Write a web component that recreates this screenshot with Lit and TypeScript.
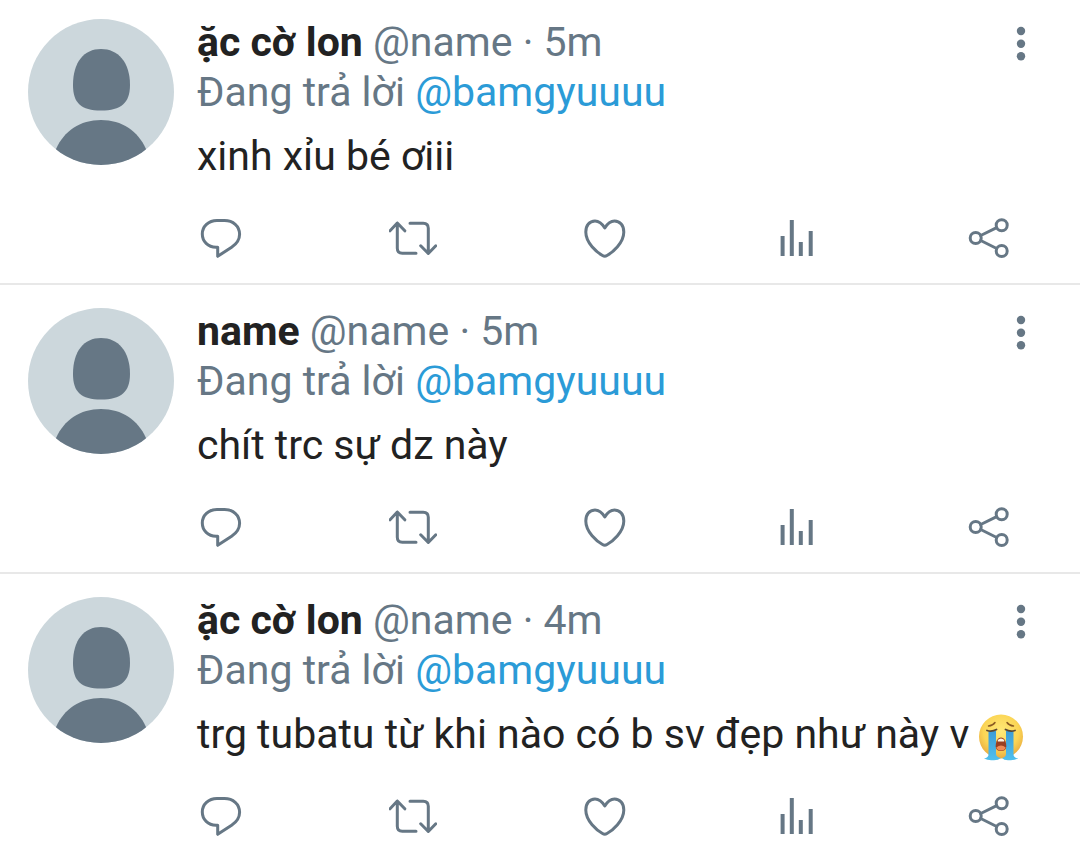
import { LitElement, html, css, svg, nothing } from "lit";
import { customElement, property } from "lit/decorators.js";

interface Tweet {
  name: string;
  handle: string;
  time: string;
  replyTo: string;
  text: string;
  crying?: boolean;
}

const tweets: Tweet[] = [
  { name: "ặc cờ lon", handle: "@name", time: "5m", replyTo: "@bamgyuuuu", text: "xinh xỉu bé ơiii" },
  { name: "name", handle: "@name", time: "5m", replyTo: "@bamgyuuuu", text: "chít trc sự dz này" },
  {
    name: "ặc cờ lon",
    handle: "@name",
    time: "4m",
    replyTo: "@bamgyuuuu",
    text: "trg tubatu từ khi nào có b sv đẹp như này v",
    crying: true,
  },
];

const actions = [
  {
    label: "Reply",
    icon: svg`<path d="M20 6.5h7.5C36 6.5 42.6 12 42.6 20.3c0 5.700-3 9.700-8 13L20.700 42.300V33.200H19C11 33 5.300 27.500 5.300 20S11.500 6.500 20 6.500z"/>`,
  },
  {
    label: "Retweet",
    icon: svg`<path d="M1 16.800 8.300 9l7.500 7.800M8.300 9v25.300q0 5 5 5H27M21 9.300h13.300q5 0 5 5V39M31.700 31.800 39.300 39.500l7.500-7.700"/>`,
  },
  {
    label: "Like",
    icon: svg`<path d="M23.800 14C21 9.500 17.500 7 14 7 8.500 7 4.800 11.500 4.800 18c0 11 11.200 20.500 16.700 23.500q2.300 1.300 4.500 0C31.500 38.500 42.800 29 42.800 18 42.800 11.500 39 7 33.500 7 30 7 26.500 9.500 23.800 14z"/>`,
  },
  {
    label: "Activity",
    icon: svg`<path stroke-linecap="butt" stroke-width="4" d="M9.600 22v20M18.800 6v36M27.800 28v14M37.700 17v25"/>`,
  },
  {
    label: "Share",
    icon: svg`<circle cx="10.700" cy="24" r="5.500"/><circle cx="36.700" cy="11.300" r="5.500"/><circle cx="36.700" cy="37" r="5.500"/><path d="M15.700 21.500 31.700 13.700M15.700 26.500l16 8"/>`,
  },
];

@customElement("tweet-item")
class TweetItem extends LitElement {
  @property({ attribute: false }) tweet!: Tweet;

  static styles = css`
    :host {
      display: block;
    }
    .tweet {
      display: grid;
      grid-template-columns: 146px minmax(0, 1fr);
      column-gap: 23px;
      padding: 0 52px 0 28px;
    }
    .avatar {
      display: block;
      width: 146px;
      height: 146px;
    }
    .head {
      display: flex;
      justify-content: space-between;
      align-items: flex-start;
    }
    .meta {
      margin-top: -2px;
    }
    .line {
      margin: 0;
      color: #667785;
    }
    .name {
      font-weight: 700;
      color: #222;
    }
    .mention {
      color: #2b9bd7;
      text-decoration: none;
    }
    .text {
      margin: 14px 0 0;
      color: #222;
    }
    .emoji {
      width: 46px;
      height: 48px;
      vertical-align: -10px;
      margin: -4px 0;
    }
    button {
      display: block;
      padding: 0;
      border: 0;
      background: none;
      color: #667785;
      cursor: pointer;
    }
    .more {
      padding-top: 6px;
    }
    .more svg {
      display: block;
      width: 14px;
      height: 38px;
      fill: currentColor;
    }
    .actions {
      display: flex;
      justify-content: space-between;
      margin-top: 33px;
      padding-right: 15px;
    }
    .icon {
      display: block;
      width: 48px;
      height: 48px;
      fill: none;
      stroke: currentColor;
      stroke-width: 3;
      stroke-linecap: round;
      stroke-linejoin: round;
    }
  `;

  private avatar() {
    return html`<svg class="avatar" viewBox="0 0 146 146" role="img" aria-label="Avatar">
      <defs><clipPath id="disc"><circle cx="73" cy="73" r="73" /></clipPath></defs>
      <g clip-path="url(#disc)">
        <rect width="146" height="146" fill="#ccd7dc" />
        <path
          fill="#667785"
          d="M73 30C90 30 102 43 102 66C102 84 93 91.500 73 91.500S45 84 45 66C45 43 56 30 73 30z"
        />
        <path fill="#667785" d="M73 101C94 101 110 112 118 130V146H28V130C36 112 52 101 73 101z" />
      </g>
    </svg>`;
  }

  private cryingFace() {
    return html`<svg class="emoji" viewBox="0 0 46 48" role="img" aria-label="😭">
      <defs>
        <radialGradient id="skin" cx="50%" cy="38%" r="62%">
          <stop offset="0" stop-color="#ffe978" />
          <stop offset="0.650" stop-color="#fbd555" />
          <stop offset="1" stop-color="#e9ab40" />
        </radialGradient>
        <linearGradient id="tear" x1="0" y1="0" x2="0" y2="1">
          <stop offset="0" stop-color="#3d9bd6" />
          <stop offset="1" stop-color="#4fc0ee" />
        </linearGradient>
      </defs>
      <circle cx="22" cy="22.500" r="22" fill="url(#skin)" />
      <path
        d="M9.500 12q4.500-.5 6.500-3.500M34.500 12q-4.500-.5-6.500-3.500"
        fill="none"
        stroke="#8a5a22"
        stroke-width="1.500"
        stroke-linecap="round"
      />
      <path
        fill="url(#tear)"
        d="M9.500 17h7.500V40q0 3 5 4-3 2.500-8 2.200-5 .5-9-1.700 4.500-1 4.500-4zM27 17h7.500V40.500q0 3 4.500 4-4 2.200-9 1.700-5 .3-7-2.200 4-1 4-4z"
      />
      <path
        d="M8 16.500q5 1.500 9.500-1M36 16.500q-5 1.500-9.500-1"
        fill="none"
        stroke="#5a4632"
        stroke-width="1.800"
        stroke-linecap="round"
      />
      <path fill="#9a3f22" d="M22 23.500c3.500 0 5.300 4 5.300 9 0 3-2 4.500-5.300 4.500s-5.300-1.500-5.300-4.500c0-5 1.800-9 5.300-9z" />
      <path fill="#fff3e0" d="M18.800 26q3.200-3 6.400 0v1.500h-6.400z" />
      <path fill="#f08a55" d="M17.300 33.500q4.700-4 9.400 0-.7 3-4.700 3t-4.700-3z" />
    </svg>`;
  }

  render() {
    const t = this.tweet;
    return html`<article class="tweet">
      ${this.avatar()}
      <div>
        <div class="head">
          <div class="meta">
            <p class="line"><span class="name">${t.name}</span> ${t.handle} · ${t.time}</p>
            <p class="line">Đang trả lời <a class="mention" href="#">${t.replyTo}</a></p>
          </div>
          <button class="more" type="button" aria-label="More">
            <svg viewBox="0 0 14 38">
              <circle cx="7" cy="6" r="4.200" />
              <circle cx="7" cy="18.700" r="4.200" />
              <circle cx="7" cy="31.300" r="4.200" />
            </svg>
          </button>
        </div>
        <p class="text">${t.text}${t.crying ? html` ${this.cryingFace()}` : nothing}</p>
        <div class="actions">
          ${actions.map(
            (a) => html`<button type="button" aria-label=${a.label}>
              <svg class="icon" viewBox="0 0 48 48">${a.icon}</svg>
            </button>`
          )}
        </div>
      </div>
    </article>`;
  }
}

@customElement("app-root")
class AppRoot extends LitElement {
  static styles = css`
    :host {
      display: block;
      min-height: 100vh;
      background: #fff;
      font: 400 41px/50px Roboto, "Noto Sans", sans-serif;
    }
    .entry {
      padding: 23px 0 21px;
      border-bottom: 2px solid #e8e8e8;
    }
    .entry:first-child {
      padding-top: 19px;
    }
    .entry:last-child {
      padding-bottom: 12px;
      border-bottom: 0;
    }
  `;

  render() {
    return html`<main>
      ${tweets.map((t) => html`<tweet-item class="entry" .tweet=${t}></tweet-item>`)}
    </main>`;
  }
}
